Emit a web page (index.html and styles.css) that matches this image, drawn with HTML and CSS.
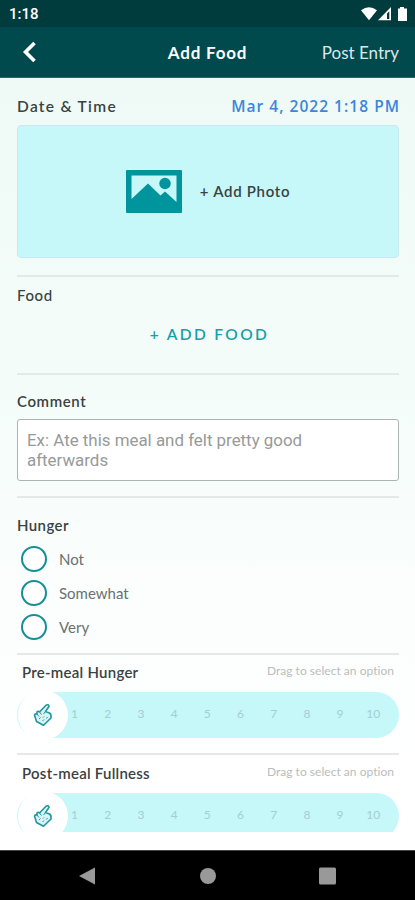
FILE: index.html
```html
<!DOCTYPE html>
<html lang="en">
<head>
    <meta charset="UTF-8">
    <meta name="viewport" content="width=device-width, initial-scale=1.0">
    <title>Add Food</title>
    <link rel="stylesheet" href="styles.css">
</head>
<body>
    <svg class="defs" width="0" height="0">
        <symbol id="hand" viewBox="0 0 20 24">
            <path d="M13 2.200Q15.500 0.800 16 3.500L12.500 8.500L16.500 10Q18.500 11 18 15L10.500 22.300L3.500 18.500L1.500 12Q2 10.500 4 11V9Q5 7.500 6.500 9Z"/>
            <path class="lines" d="M4 11L6 13.500M6.500 9L8.500 11.500M12.500 8.500L10.500 11M6 16L7.500 14.500M9.500 18L11 16.500M10 14.500L11 13.500M13.500 15.500L14.500 14"/>
        </symbol>
    </svg>

    <div class="status-bar">
        <span>1:18</span>
        <svg width="48" height="16" viewBox="0 0 48 16">
            <path d="M0 4.3Q8 -1.8 16 4.3L8 14.3Z"/>
            <path fill-rule="evenodd" d="M17 14.3L30 1V14.3ZM26 7.5V13H28.3V5.2Z"/>
            <path d="M37 2.5H39V1H43V2.5H46V15H37Z"/>
        </svg>
    </div>

    <header class="header">
        <svg class="back" width="14" height="22" viewBox="0 0 14 22">
            <path d="M12.500 2L3.500 11L12.500 20"/>
        </svg>
        <h1>Add Food</h1>
        <span class="post">Post Entry</span>
    </header>

    <main class="content">
        <!-- Date and photo -->
        <section class="entry">
            <div class="row">
                <span class="label date-label">Date &amp; Time</span>
                <span class="date">Mar 4, 2022 1:18 PM</span>
            </div>
            <div class="photo">
                <svg width="56" height="43" viewBox="0 0 56 43">
                    <path fill-rule="evenodd" d="M1 0H55Q56 0 56 1V42Q56 43 55 43H1Q0 43 0 42V1Q0 0 1 0ZM5.5 5.5V29L22 13.5L34.500 25.500L39 21.500L50.500 32V5.500Z"/>
                    <circle cx="39" cy="13.500" r="5.700"/>
                </svg>
                <span>+ Add Photo</span>
            </div>
        </section>

        <!-- Food -->
        <section class="food">
            <span class="label food-label">Food</span>
            <div class="add-food">+ ADD FOOD</div>
        </section>

        <!-- Comment -->
        <section class="comment">
            <span class="label comment-label">Comment</span>
            <div class="comment-box">Ex: Ate this meal and felt pretty good afterwards</div>
        </section>

        <!-- Hunger -->
        <section class="hunger">
            <span class="label hunger-label">Hunger</span>
            <div class="option"><i></i><span class="not">Not</span></div>
            <div class="option"><i></i><span>Somewhat</span></div>
            <div class="option"><i></i><span>Very</span></div>
        </section>

        <!-- Sliders -->
        <section class="scale">
            <div class="scale-head">
                <span class="label">Pre-meal Hunger</span>
                <span class="hint">Drag to select an option</span>
            </div>
            <div class="slider">
                <div class="knob"><svg width="20" height="24"><use href="#hand"/></svg></div>
                <div class="ticks">
                    <span>1</span><span>2</span><span>3</span><span>4</span><span>5</span>
                    <span>6</span><span>7</span><span>8</span><span>9</span><span>10</span>
                </div>
            </div>
        </section>
        <section class="scale">
            <div class="scale-head">
                <span class="label">Post-meal Fullness</span>
                <span class="hint">Drag to select an option</span>
            </div>
            <div class="slider">
                <div class="knob"><svg width="20" height="24"><use href="#hand"/></svg></div>
                <div class="ticks">
                    <span>1</span><span>2</span><span>3</span><span>4</span><span>5</span>
                    <span>6</span><span>7</span><span>8</span><span>9</span><span>10</span>
                </div>
            </div>
        </section>
    </main>

    <nav class="nav-bar">
        <svg width="18" height="20" viewBox="0 0 18 20"><path d="M0 10L16 1.500V18.500Z"/></svg>
        <svg width="18" height="18" viewBox="0 0 18 18"><circle cx="9" cy="9" r="8"/></svg>
        <svg width="18" height="18" viewBox="0 0 18 18"><rect x="0" y="0.500" width="17" height="17" rx="1.500"/></svg>
    </nav>
</body>
</html>
```
FILE: styles.css
```css
* {
    box-sizing: border-box;
}

body {
    margin: 0;
    height: 900px;
    display: flex;
    flex-direction: column;
    overflow: hidden;
    background: linear-gradient(#effaf7 78px, #f3fcf9 350px, #fbfefd 600px, #fff 780px);
    font-family: Lato, sans-serif;
    color: #3a4242;
}

svg {
    display: block;
}

.defs {
    position: absolute;
}

.status-bar {
    height: 27px;
    flex: none;
    padding: 0 4px 0 9px;
    display: flex;
    justify-content: space-between;
    align-items: center;
    background: #003c3d;
    color: #fff;
    font: 500 15px Roboto, sans-serif;
}

.status-bar svg {
    fill: #fff;
    margin-right: 2px;
}

.header {
    height: 51px;
    flex: none;
    padding: 0 16px 0 22px;
    display: grid;
    grid-template-columns: 1fr auto 1fr;
    align-items: center;
    background: #004a4e;
    border-bottom: 1px solid #2f6568;
    color: #fff;
}

.back {
    fill: none;
    stroke: #fff;
    stroke-width: 3.6;
}

.header h1 {
    margin: 0 6px 0 0;
    font-size: 17px;
    font-weight: 700;
    letter-spacing: 0.8px;
}

.post {
    justify-self: end;
    font-size: 17px;
    color: #dbe8e8;
}

.content {
    height: 754px;
    flex: none;
    padding: 0 16px 0 17px;
    overflow: hidden;
}

section {
    border-bottom: 2px solid #e2e9e8;
}

.label {
    display: block;
    font-size: 15px;
    line-height: 20px;
    font-weight: 600;
    letter-spacing: 0.6px;
}

.entry {
    height: 199px;
    padding-top: 18px;
}

.row {
    display: flex;
    justify-content: space-between;
    height: 29px;
}

.date-label {
    font-size: 15.5px;
    letter-spacing: 1.3px;
}

.date {
    margin-right: -1px;
    font: 600 15.5px/20px "Open Sans", sans-serif;
    letter-spacing: 1.03px;
    color: #3b86dc;
}

.photo {
    height: 133px;
    padding-bottom: 1px;
    display: flex;
    align-items: center;
    justify-content: center;
    gap: 18px;
    background: #c6f7f9;
    border: 1px solid #c9e9f2;
    border-radius: 4px;
    font-size: 15px;
    font-weight: 600;
    letter-spacing: 0.7px;
}

.photo svg {
    fill: #00959d;
}

.food {
    height: 98px;
    padding-top: 8px;
}

.food-label {
    font-weight: 500;
}

.add-food {
    margin-top: 19px;
    padding-left: 3px;
    font-size: 15.5px;
    line-height: 20px;
    font-weight: 600;
    letter-spacing: 2.35px;
    text-align: center;
    color: #15a0a8;
}

.comment {
    height: 123px;
    padding-top: 16px;
}

.comment-box {
    height: 62px;
    margin-top: 8px;
    padding: 10px 80px 0 9px;
    border: 1px solid #aeb4b4;
    border-radius: 3px;
    background: #fff;
    font: 16.9px/20px Roboto, sans-serif;
    color: #979a9a;
}

.hunger {
    height: 157px;
    padding-top: 17px;
}

.hunger-label {
    margin-bottom: 7px;
    letter-spacing: 0.4px;
}

.option {
    height: 34px;
    padding-left: 4px;
    display: flex;
    align-items: center;
    gap: 12px;
    font-size: 15px;
    color: #6a7171;
}

.option i {
    width: 26px;
    height: 26px;
    border: 2px solid #168e96;
    border-radius: 50%;
    background: #fff;
}

.scale {
    height: 100px;
}

.scale .label {
    letter-spacing: 0.25px;
}

.scale:last-child {
    height: 101px;
    padding-top: 1px;
    border: none;
}

.scale-head {
    display: flex;
    justify-content: space-between;
    height: 37px;
    padding: 7px 5px 0 5px;
}

.hint {
    font-size: 12px;
    line-height: 17px;
    letter-spacing: 0.03px;
    color: #b9bdbd;
}

.slider {
    height: 46px;
    display: flex;
    align-items: center;
    border-radius: 23px;
    background: #c6f7f9;
}

.knob {
    width: 50px;
    height: 50px;
    margin-left: 1px;
    flex: none;
    display: flex;
    align-items: center;
    justify-content: center;
    border-radius: 50%;
    background: #fff;
}

.knob svg {
    fill: #d9f3f4;
    stroke: #22959f;
    stroke-width: 1.6;
    stroke-linejoin: round;
}

.lines {
    stroke-width: 1;
}

.ticks {
    flex: 1;
    display: grid;
    grid-template-columns: repeat(10, 33.2px);
    margin-left: -10px;
    padding-bottom: 3px;
    text-align: center;
    font-size: 12px;
    color: #a4ced2;
}

.nav-bar {
    height: 50px;
    margin-top: 18px;
    flex: none;
    display: flex;
    align-items: center;
    justify-content: center;
    gap: 102px;
    background: #000;
    border-top: 1px solid #444;
}

.nav-bar svg {
    fill: #999;
}
```
